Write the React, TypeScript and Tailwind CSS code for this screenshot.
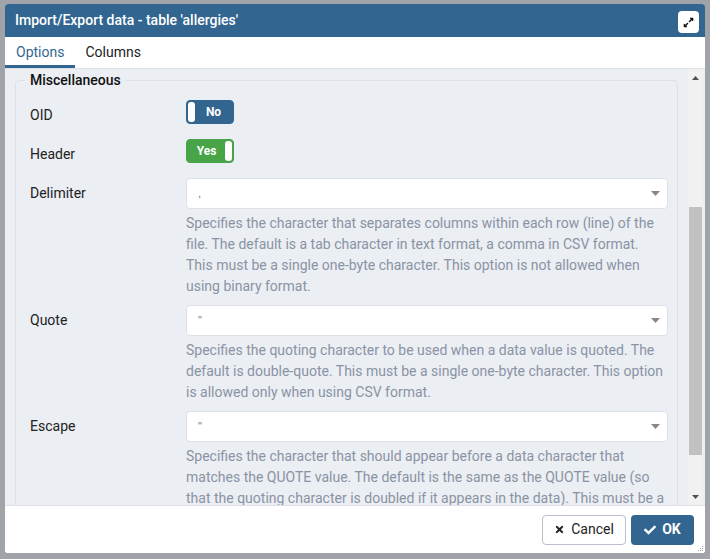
import { FaCheck, FaTimes, FaExpandAlt } from "react-icons/fa"

const Toggle = ({ on }: { on: boolean }) => (
  <div
    className={`w-[48px] h-[24px] rounded-[4px] p-[1px] flex items-center ${
      on ? "bg-[#47a447] border border-[#47a447]" : "bg-[#326690] border border-[#326690]"
    }`}
  >
    {!on && <div className="w-[7px] h-full bg-white rounded-[3px]" />}
    <span className="flex-1 text-center text-white text-[12px] font-bold leading-none">
      {on ? "Yes" : "No"}
    </span>
    {on && <div className="w-[7px] h-full bg-white rounded-[3px]" />}
  </div>
)

const Caret = () => (
  <svg width="9" height="5" viewBox="0 0 9 5">
    <path d="M0 0h9L4.5 5z" fill="#888" />
  </svg>
)

const Select = ({ value }: { value: string }) => (
  <div className="h-[31px] bg-white border border-[#dde0e6] rounded-[4px] flex items-center justify-between pl-[11px] pr-[7px]">
    <span className="text-[11px] text-[#777] font-[Arial,sans-serif]">{value}</span>
    <Caret />
  </div>
)

const Row = ({ label, children }: { label: string; children: React.ReactNode }) => (
  <div className="flex">
    <div className="w-[156px] shrink-0 h-[30px] flex items-center text-[14px] text-[#222]">
      {label}
    </div>
    <div className="flex-1">{children}</div>
  </div>
)

const Help = ({ children }: { children: React.ReactNode }) => (
  <p className="mt-[4px] text-[14px] leading-[21px] text-[#8a93a3]">{children}</p>
)

export default function App() {
  return (
    <div className="w-[710px] h-[559px] bg-[#a0a3a8] pt-[4px] pl-[5px] overflow-hidden font-[Roboto,sans-serif]">
      <div className="relative w-[700px] h-[549px] flex flex-col bg-white rounded-[3px] overflow-hidden">
        <div className="h-[33px] shrink-0 bg-[#326690] flex items-center justify-between pl-[10px] pr-[6px]">
          <span className="text-white text-[14px] font-medium">Import/Export data - table 'allergies'</span>
          <div className="w-[21px] h-[22px] mt-[3px] bg-white rounded-[4px] flex items-center justify-center">
            <FaExpandAlt size={11} color="#111" />
          </div>
        </div>

        <div className="h-[32px] shrink-0 flex border-b border-[#dde0e6] text-[14px]">
          <div className="px-[11px] flex items-center border-b-[3px] border-[#326690] text-[#326690] pt-[3px]">
            Options
          </div>
          <div className="px-[10px] flex items-center text-[#222]">Columns</div>
        </div>

        <div className="flex-1 flex bg-[#ebeef3] overflow-hidden">
          <div className="flex-1 pl-[10px] pr-[10px] pt-[1px] overflow-hidden">
            <fieldset className="border border-[#dde0e6] rounded-[4px] pl-[14px] pr-[9px] pb-[20px]">
              <legend className="-ml-[5px] px-[5px] text-[14px] leading-[20px] font-medium text-[#111]">
                Miscellaneous
              </legend>
              <div className="mt-[10px] flex flex-col">
                <div className="mb-[9px]">
                  <Row label="OID">
                    <Toggle on={false} />
                  </Row>
                </div>
                <div className="mb-[9px]">
                  <Row label="Header">
                    <Toggle on={true} />
                  </Row>
                </div>
                <div className="mb-[8px]">
                  <Row label="Delimiter">
                    <Select value="," />
                    <Help>
                      Specifies the character that separates columns within each row (line) of the
                      file. The default is a tab character in text format, a comma in CSV format.
                      This must be a single one-byte character. This option is not allowed when
                      using binary format.
                    </Help>
                  </Row>
                </div>
                <div className="mb-[8px]">
                  <Row label="Quote">
                    <Select value={'"'} />
                    <Help>
                      Specifies the quoting character to be used when a data value is quoted. The
                      default is double-quote. This must be a single one-byte character. This option
                      is allowed only when using CSV format.
                    </Help>
                  </Row>
                </div>
                <div className="mb-[8px]">
                  <Row label="Escape">
                    <Select value={'"'} />
                    <Help>
                      Specifies the character that should appear before a data character that
                      matches the QUOTE value. The default is the same as the QUOTE value (so
                      that the quoting character is doubled if it appears in the data). This must be a
                      single one-byte character. This option is allowed only when using CSV format.
                    </Help>
                  </Row>
                </div>
              </div>
            </fieldset>
          </div>

          <div className="w-[15px] mr-[2px] shrink-0 bg-[#f1f1f1] flex flex-col">
            <div className="h-[17px] flex items-center justify-center">
              <svg width="7" height="4" viewBox="0 0 7 4">
                <path d="M0 4h7L3.5 0z" fill="#505050" />
              </svg>
            </div>
            <div className="flex-1 pt-[121px]">
              <div className="h-[248px] mx-[1px] bg-[#c1c1c1]" />
            </div>
            <div className="h-[17px] flex items-center justify-center">
              <svg width="7" height="4" viewBox="0 0 7 4">
                <path d="M0 0h7L3.5 4z" fill="#505050" />
              </svg>
            </div>
          </div>
        </div>

        <div className="h-[48px] shrink-0 border-t border-[#dde0e6] bg-white flex items-center justify-end gap-[5px] pr-[11px]">
          <button className="w-[84px] h-[30px] border border-[#b8bfc9] rounded-[4px] flex items-center justify-center gap-[6px] text-[14px] text-[#222]">
            <FaTimes size={11} />
            <span>Cancel</span>
          </button>
          <button className="w-[63px] h-[30px] bg-[#326690] rounded-[4px] flex items-center justify-center gap-[6px] text-[14px] font-bold text-white">
            <FaCheck size={12} />
            <span>OK</span>
          </button>
        </div>

        <svg className="absolute right-[1px] bottom-[1px]" width="7" height="7" viewBox="0 0 7 7">
          <g fill="#9aa0a8">
            <rect x="5" y="1" width="1" height="1" />
            <rect x="3" y="3" width="1" height="1" />
            <rect x="5" y="3" width="1" height="1" />
            <rect x="1" y="5" width="1" height="1" />
            <rect x="3" y="5" width="1" height="1" />
            <rect x="5" y="5" width="1" height="1" />
          </g>
        </svg>
      </div>
    </div>
  )
}
